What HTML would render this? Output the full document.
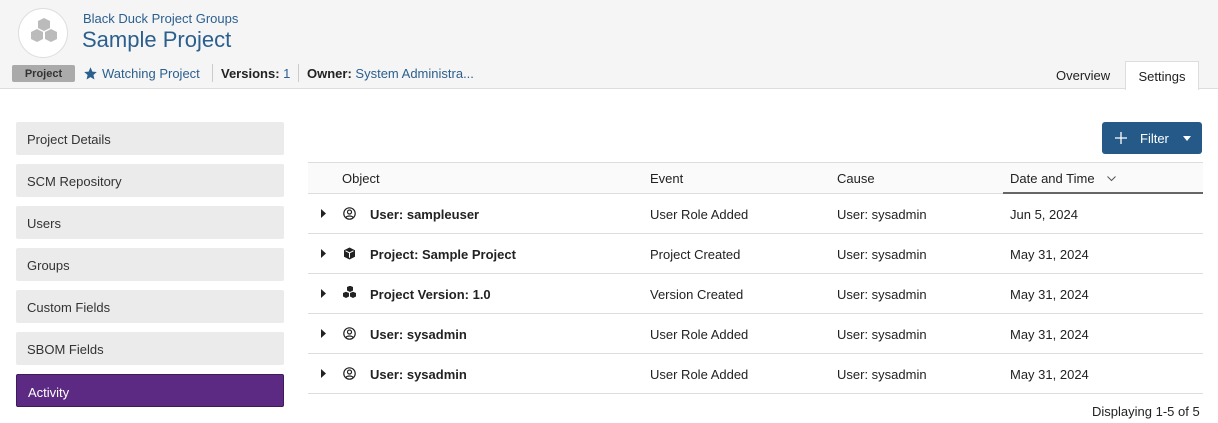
<!DOCTYPE html>
<html><head><style>
*{box-sizing:border-box;margin:0;padding:0}
body{width:1218px;height:423px;background:#fff;font-family:"Liberation Sans",sans-serif;color:#222;position:relative;overflow:hidden;font-size:13px}
.hdr{position:absolute;left:0;top:0;width:1218px;height:89px;background:#f5f5f5;border-bottom:1px solid #ddd}
.logo{position:absolute;left:18px;top:8px;width:50px;height:50px;border-radius:50%;background:#fff;border:1px solid #ddd}
.a{position:absolute;white-space:nowrap}
.side{position:absolute;left:16px;width:268px;height:33px;background:#ebebeb;border-radius:2px;padding:10px 11px;font-size:13px;color:#333}
.row{position:absolute;left:308px;width:895px;height:40px;border-bottom:1px solid #ddd;font-size:13px}
.row span{position:absolute;top:13px}
.row svg{position:absolute}
</style></head><body>
<div class="hdr">
<div class="logo"><svg width="50" height="50" viewBox="0 0 50 50"><g fill="#bbb"><path d="M19 12l6-3 6 3v7l-6 3-6-3z"/><path d="M12 23l6-3 6 3v7l-6 3-6-3z"/><path d="M26 23l6-3 6 3v7l-6 3-6-3z"/></g></svg></div>
<div class="a" style="left:83px;top:11px;font-size:13px;color:#2b5f8e">Black Duck Project Groups</div>
<div class="a" style="left:82px;top:27px;font-size:22px;color:#2b5f8e">Sample Project</div>
<div class="a" style="left:12px;top:65px;width:63px;height:17px;background:#aaa;border-radius:2px;font-size:11px;font-weight:bold;color:#333;text-align:center;padding-top:3px">Project</div>
<svg class="a" style="left:83px;top:66px" width="15" height="15" viewBox="0 0 24 24"><path fill="#2b5f8e" d="M12 2l3 7 7 .6-5.3 4.7 1.6 7.2L12 17.8 5.7 21.5l1.6-7.2L2 9.6 9 9z"/></svg>
<div class="a" style="left:102px;top:66px;color:#2b5f8e">Watching Project</div>
<div class="a" style="left:212px;top:64px;height:18px;border-left:1px solid #ccc"></div>
<div class="a" style="left:221px;top:66px"><b>Versions:</b> <span style="color:#2b5f8e">1</span></div>
<div class="a" style="left:298px;top:64px;height:18px;border-left:1px solid #ccc"></div>
<div class="a" style="left:307px;top:66px"><b>Owner:</b> <span style="color:#2b5f8e">System Administra...</span></div>
<div class="a" style="left:1056px;top:68px">Overview</div>
<div class="a" style="left:1125px;top:61px;width:74px;height:29px;background:#fff;border:1px solid #ddd;border-bottom:none;padding-top:7px;text-align:center">Settings</div>
</div>
<div class="side" style="top:122px">Project Details</div>
<div class="side" style="top:164px">SCM Repository</div>
<div class="side" style="top:206px">Users</div>
<div class="side" style="top:248px">Groups</div>
<div class="side" style="top:290px">Custom Fields</div>
<div class="side" style="top:332px">SBOM Fields</div>
<div class="side" style="top:374px;background:#5c2a82;color:#fff;border:1px solid #3d1a5a">Activity</div>
<div class="a" style="left:1102px;top:122px;width:100px;height:32px;background:#255a88;border-radius:3px;color:#fff;font-size:13px">
<svg style="position:absolute;left:13px;top:10px" width="12" height="12" viewBox="0 0 12 12"><path d="M6 0v12M0 6h12" stroke="#fff" stroke-width="1.3"/></svg>
<span style="position:absolute;left:38px;top:9px">Filter</span>
<svg style="position:absolute;left:81px;top:14px" width="8" height="5" viewBox="0 0 8 5"><path d="M0 0h8L4 5z" fill="#fff"/></svg></div>
<div class="row" style="top:162px;height:32px;background:#fafafa;border-top:1px solid #ddd"><span style="left:34px;top:8px">Object</span><span style="left:342px;top:8px">Event</span><span style="left:529px;top:8px">Cause</span><span style="left:702px;top:8px">Date and Time</span><svg style="left:799px;top:13px" width="9" height="6" viewBox="0 0 9 6"><path d="M.5.5l4 4 4-4" fill="none" stroke="#555"/></svg><div style="position:absolute;left:695px;top:29px;width:200px;border-top:2px solid #666"></div></div>

<div class="row" style="top:194px"><svg style="left:13px;top:15px" width="5" height="9"><path d="M0 0l5 4.5L0 9z" fill="#222"/></svg><svg style="left:35px;top:13px" width="13" height="13" viewBox="0 0 13 13"><circle cx="6.5" cy="6.5" r="5.7" fill="none" stroke="#222" stroke-width="1.2"/><circle cx="6.5" cy="5" r="2" fill="none" stroke="#222" stroke-width="1.2"/><path d="M3 10.5c1-2 6-2 7 0" fill="none" stroke="#222" stroke-width="1.2"/></svg><span style="left:62px;font-weight:bold">User: sampleuser</span><span style="left:342px">User Role Added</span><span style="left:529px">User: sysadmin</span><span style="left:702px">Jun 5, 2024</span></div>

<div class="row" style="top:234px"><svg style="left:13px;top:15px" width="5" height="9"><path d="M0 0l5 4.5L0 9z" fill="#222"/></svg><svg style="left:35px;top:13px" width="13" height="13" viewBox="0 0 13 13"><path d="M6.5 .5l5.5 2.7v6.6L6.5 12.5 1 9.8V3.2z" fill="#222"/><path d="M2.5 3.8l4 2 4-2M6.5 5.8v5" stroke="#fff" fill="none"/></svg><span style="left:62px;font-weight:bold">Project: Sample Project</span><span style="left:342px">Project Created</span><span style="left:529px">User: sysadmin</span><span style="left:702px">May 31, 2024</span></div>

<div class="row" style="top:274px"><svg style="left:13px;top:15px" width="5" height="9"><path d="M0 0l5 4.5L0 9z" fill="#222"/></svg><svg style="left:34px;top:12px" width="15" height="15" viewBox="0 0 15 15"><g fill="#222"><path d="M5 1l3-1.3L11 1v3.5L8 6 5 4.5z"/><path d="M1 7l3-1.3L7 7v3.5L4 12 1 10.5z"/><path d="M8 7l3-1.3L14 7v3.5L11 12 8 10.5z"/></g></svg><span style="left:62px;font-weight:bold">Project Version: 1.0</span><span style="left:342px">Version Created</span><span style="left:529px">User: sysadmin</span><span style="left:702px">May 31, 2024</span></div>

<div class="row" style="top:314px"><svg style="left:13px;top:15px" width="5" height="9"><path d="M0 0l5 4.5L0 9z" fill="#222"/></svg><svg style="left:35px;top:13px" width="13" height="13" viewBox="0 0 13 13"><circle cx="6.5" cy="6.5" r="5.7" fill="none" stroke="#222" stroke-width="1.2"/><circle cx="6.5" cy="5" r="2" fill="none" stroke="#222" stroke-width="1.2"/><path d="M3 10.5c1-2 6-2 7 0" fill="none" stroke="#222" stroke-width="1.2"/></svg><span style="left:62px;font-weight:bold">User: sysadmin</span><span style="left:342px">User Role Added</span><span style="left:529px">User: sysadmin</span><span style="left:702px">May 31, 2024</span></div>

<div class="row" style="top:354px"><svg style="left:13px;top:15px" width="5" height="9"><path d="M0 0l5 4.5L0 9z" fill="#222"/></svg><svg style="left:35px;top:13px" width="13" height="13" viewBox="0 0 13 13"><circle cx="6.5" cy="6.5" r="5.7" fill="none" stroke="#222" stroke-width="1.2"/><circle cx="6.5" cy="5" r="2" fill="none" stroke="#222" stroke-width="1.2"/><path d="M3 10.5c1-2 6-2 7 0" fill="none" stroke="#222" stroke-width="1.2"/></svg><span style="left:62px;font-weight:bold">User: sysadmin</span><span style="left:342px">User Role Added</span><span style="left:529px">User: sysadmin</span><span style="left:702px">May 31, 2024</span></div>
<div class="a" style="left:1092px;top:404px">Displaying 1-5 of 5</div>
</body></html>
